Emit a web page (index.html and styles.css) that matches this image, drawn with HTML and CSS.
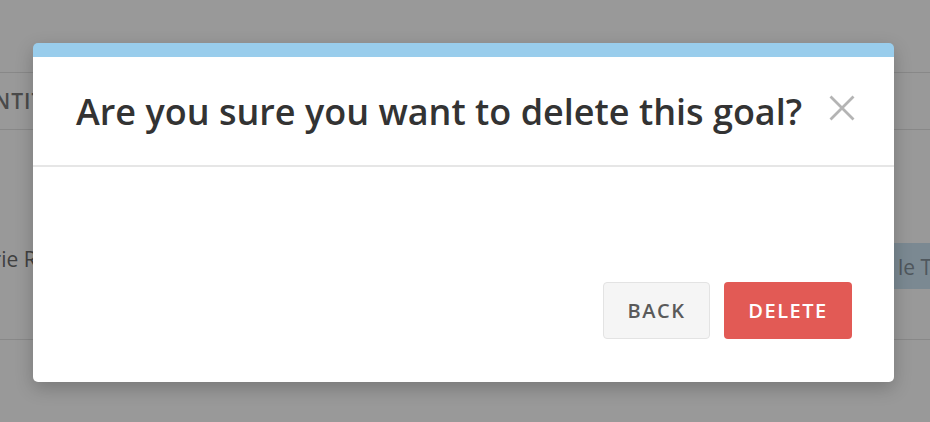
FILE: index.html
```html
<!DOCTYPE html>
<html lang="en">
<head>
<meta charset="utf-8">
<title>Delete goal</title>
<link rel="stylesheet" href="styles.css">
</head>
<body>
<div class="page">
  <div class="table">
    <div class="row head-row"><span class="col-label">ENTITY</span></div>
    <div class="row data-row">
      <span class="cell-name">Marie R</span>
      <span class="cell-tag">le T</span>
    </div>
  </div>
</div>
<div class="overlay">
  <div class="modal" role="dialog">
    <div class="modal-header">
      <h2 class="modal-title">Are you sure you want to delete this goal?</h2>
      <button class="close" aria-label="Close">
        <svg width="26" height="26" viewBox="0 0 26 26"><path d="M1.5 1.5 L24.5 24.5 M24.5 1.5 L1.5 24.5" stroke="#b4b4b4" stroke-width="2.8" fill="none"/></svg>
      </button>
    </div>
    <div class="modal-body">
      <button class="btn btn-back">BACK</button>
      <button class="btn btn-delete">DELETE</button>
    </div>
  </div>
</div>
</body>
</html>
```
FILE: styles.css
```css
html, body {
  margin: 0;
  padding: 0;
}
body {
  width: 930px;
  height: 422px;
  overflow: hidden;
  background: #999999;
  font-family: "Open Sans", "Liberation Sans", sans-serif;
  position: relative;
}
.page {
  padding-top: 72px;
  overflow: hidden;
}
.table {
  border-top: 1px solid #888888;
}
.row {
  display: flex;
  border-bottom: 1px solid #888888;
}
.head-row {
  height: 56px;
  align-items: center;
}
.col-label {
  margin-left: -19px;
  font-size: 21px;
  font-weight: 600;
  color: #4a4a4a;
  letter-spacing: 1px;
}
.data-row {
  height: 210px;
  box-sizing: border-box;
  padding-top: 113px;
  justify-content: space-between;
  align-items: flex-start;
}
.cell-name {
  margin-left: -38px;
  font-size: 21px;
  line-height: 32px;
  color: #404040;
}
.cell-tag {
  background: #7b8992;
  color: #4f575d;
  font-size: 21px;
  height: 46px;
  line-height: 48px;
  padding: 0 0 0 40px;
  width: 32px;
  white-space: nowrap;
  overflow: hidden;
}
.overlay {
  position: absolute;
  left: 33px;
  top: 43px;
}
.modal {
  width: 861px;
  background: #ffffff;
  border-radius: 5px;
  border-top: 14px solid #99cdec;
  box-shadow: 0 6px 18px rgba(0, 0, 0, 0.22);
  overflow: hidden;
}
.modal-header {
  height: 110px;
  border-bottom: 2px solid #e6e6e6;
  display: flex;
  align-items: center;
  justify-content: space-between;
  padding: 0 39px 0 43px;
  box-sizing: border-box;
}
.modal-title {
  margin: 0;
  font-size: 36px;
  font-weight: 600;
  color: #333333;
  letter-spacing: 0;
  white-space: nowrap;
}
.close {
  border: 0;
  background: none;
  padding: 0;
  width: 26px;
  height: 26px;
  margin-top: -6px;
  display: flex;
}
.modal-body {
  height: 215px;
  box-sizing: border-box;
  padding: 0 42px 43px;
  display: flex;
  justify-content: flex-end;
  align-items: flex-end;
  gap: 14px;
}
.btn {
  height: 57px;
  border-radius: 4px;
  font-family: "Open Sans", "Liberation Sans", sans-serif;
  font-size: 20px;
  font-weight: 600;
  letter-spacing: 1.5px;
  padding: 0;
  cursor: pointer;
}
.btn-back {
  width: 107px;
  background: #f5f5f5;
  border: 1px solid #e3e3e3;
  color: #5a5a5a;
}
.btn-delete {
  width: 128px;
  background: #e25a55;
  border: 0;
  color: #ffffff;
}
```
